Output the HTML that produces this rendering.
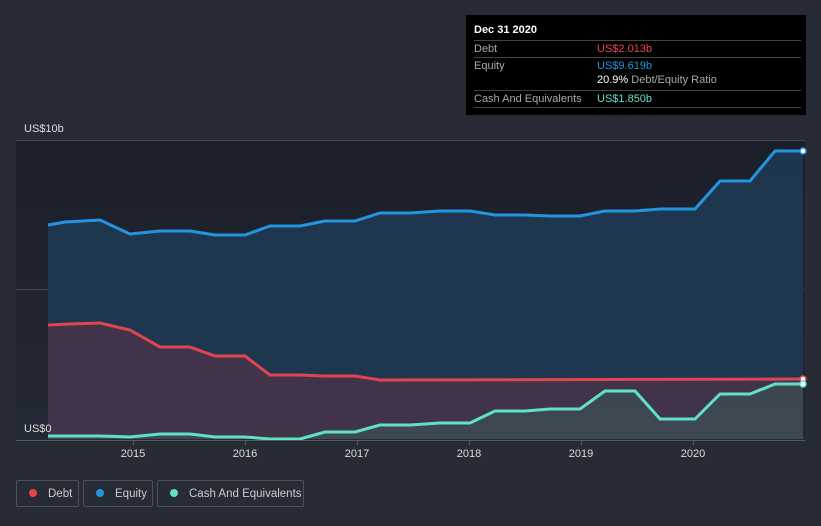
<!DOCTYPE html><html><head><style>
body{margin:0;width:821px;height:526px;background:#262b36;font-family:"Liberation Sans",sans-serif;overflow:hidden;position:relative}
.tt{position:absolute;left:466px;top:15px;width:340px;height:100px;background:#000;color:#fff;font-size:11px}
.row{position:absolute;left:8px;width:327px;border-top:1px solid #444;height:17px;line-height:17px;color:#aaa}
.lg{position:absolute;top:480px;height:27px;border:1px solid #4a4f5a;border-radius:2px;color:#ccc;font-size:11.5px;line-height:26px;box-sizing:border-box;white-space:nowrap}
.lg i{display:inline-block;width:8px;height:8px;border-radius:50%;margin:0 11px 0 12px;vertical-align:0px}
</style></head><body>
<svg width="821" height="526" style="position:absolute;left:0;top:0">
<defs><linearGradient id="g" x1="0" y1="0" x2="0" y2="1"><stop offset="0" stop-color="#1b1f29"/><stop offset="1" stop-color="#232835"/></linearGradient></defs>
<rect x="16" y="140" width="789" height="299" fill="url(#g)"/>
<line x1="16" y1="140.5" x2="805" y2="140.5" stroke="#444a55"/>
<line x1="16" y1="289.5" x2="805" y2="289.5" stroke="#3a404b"/>
<polygon fill="#1e3a55" fill-opacity="0.85" points="48,439 48,225 65,222 100,220 130,234 160,231 190,231 215,235 245,235 270,226 300,226 325,221 355,221 380,213 410,213 440,211 470,211 495,215 525,215 550,216 580,216 605,211 635,211 660,209 695,209 720,181 750,181 775,151 803,151 803,439"/>
<polygon fill="#4a3548" fill-opacity="0.8" points="48,439 48,325 70,324 100,323 130,330 160,347 190,347 215,356 245,356 270,375 300,375 325,376 355,376 380,380 803,379 803,439"/>
<polygon fill="#3a5558" fill-opacity="0.6" points="48,439 48,436 100,436 130,437 160,434 190,434 215,437 245,437 270,439 300,439 325,432 355,432 380,425 410,425 440,423 470,423 495,411 525,411 550,409 580,409 605,391 635,391 660,419 695,419 720,394 750,394 775,384 803,384 803,439"/>
<polyline fill="none" stroke="#2394e0" stroke-width="3" points="48,225 65,222 100,220 130,234 160,231 190,231 215,235 245,235 270,226 300,226 325,221 355,221 380,213 410,213 440,211 470,211 495,215 525,215 550,216 580,216 605,211 635,211 660,209 695,209 720,181 750,181 775,151 803,151"/>
<polyline fill="none" stroke="#e04450" stroke-width="3" points="48,325 70,324 100,323 130,330 160,347 190,347 215,356 245,356 270,375 300,375 325,376 355,376 380,380 803,379"/>
<polyline fill="none" stroke="#5ee1c8" stroke-width="3" points="48,436 100,436 130,437 160,434 190,434 215,437 245,437 270,439 300,439 325,432 355,432 380,425 410,425 440,423 470,423 495,411 525,411 550,409 580,409 605,391 635,391 660,419 695,419 720,394 750,394 775,384 803,384"/>
<circle cx="803" cy="151" r="3" fill="#fff" stroke="#2394e0" stroke-width="1.5"/>
<circle cx="803" cy="379" r="3" fill="#fff" stroke="#e04450" stroke-width="1.5"/>
<circle cx="803" cy="384" r="3" fill="#fff" stroke="#5ee1c8" stroke-width="1.5"/>
<line x1="16" y1="440.5" x2="805" y2="440.5" stroke="#555b66"/>
<g stroke="#555b66"><line x1="133.5" y1="440" x2="133.5" y2="445"/><line x1="245.5" y1="440" x2="245.5" y2="445"/><line x1="357.5" y1="440" x2="357.5" y2="445"/><line x1="469.5" y1="440" x2="469.5" y2="445"/><line x1="581.5" y1="440" x2="581.5" y2="445"/><line x1="693.5" y1="440" x2="693.5" y2="445"/></g>
<g fill="#ddd" font-size="11" font-family="Liberation Sans" text-anchor="middle"><text x="133" y="457">2015</text><text x="245" y="457">2016</text><text x="357" y="457">2017</text><text x="469" y="457">2018</text><text x="581" y="457">2019</text><text x="693" y="457">2020</text></g>
<g fill="#ddd" font-size="11" font-family="Liberation Sans"><text x="24" y="132">US$10b</text><text x="24" y="432">US$0</text></g>
</svg>
<div class="tt">
<div style="position:absolute;left:8px;top:9px;font-weight:bold">Dec 31 2020</div>
<div class="row" style="top:25px">Debt<span style="position:absolute;left:123px;color:#e8444f">US$2.013b</span></div>
<div class="row" style="top:42px">Equity<span style="position:absolute;left:123px;color:#2394e0">US$9.619b</span></div>
<div style="position:absolute;left:131px;top:59px;color:#aaa"><b style="color:#fff;font-weight:normal">20.9%</b> Debt/Equity Ratio</div>
<div class="row" style="top:75px">Cash And Equivalents<span style="position:absolute;left:123px;color:#5ee1c8">US$1.850b</span></div>
<div class="row" style="top:92px;height:0"></div>
</div>
<div class="lg" style="left:16px;width:63px"><i style="background:#e8444f"></i>Debt</div>
<div class="lg" style="left:83px;width:70px"><i style="background:#2394e0"></i>Equity</div>
<div class="lg" style="left:157px;width:147px"><i style="background:#5ee1c8"></i>Cash And Equivalents</div>
</body></html>
